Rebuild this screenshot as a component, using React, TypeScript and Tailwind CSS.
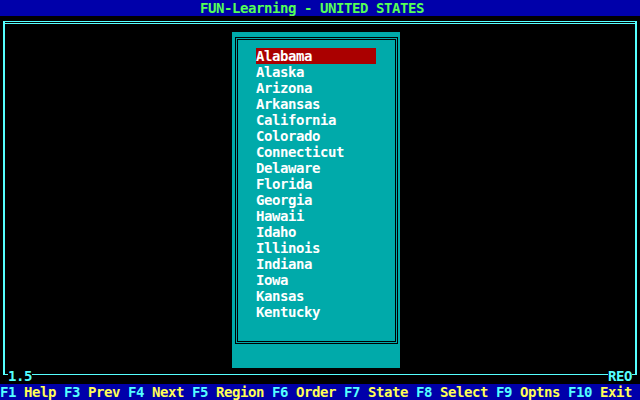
import React from "react";

const states = [
  "Alabama",
  "Alaska",
  "Arizona",
  "Arkansas",
  "California",
  "Colorado",
  "Connecticut",
  "Delaware",
  "Florida",
  "Georgia",
  "Hawaii",
  "Idaho",
  "Illinois",
  "Indiana",
  "Iowa",
  "Kansas",
  "Kentucky",
];

const keys: [string, string][] = [
  ["F1", "Help"],
  ["F3", "Prev"],
  ["F4", "Next"],
  ["F5", "Region"],
  ["F6", "Order"],
  ["F7", "State"],
  ["F8", "Select"],
  ["F9", "Optns"],
  ["F10", "Exit"],
];

export default function App() {
  return (
    <div
      className="w-[640px] h-[400px] bg-black flex flex-col overflow-hidden font-bold text-[14px] tracking-[-0.43px] leading-[16px] whitespace-pre"
      style={{ fontFamily: '"DejaVu Sans Mono", "Liberation Mono", monospace' }}
    >
      {/* title bar */}
      <div className="h-[16px] bg-[#0000AA] text-[#55FF55] pl-[200px]">
        FUN-Learning - UNITED STATES
      </div>

      {/* outer frame */}
      <div className="mt-[5px] mx-[3px] border-t border-x-2 border-[#55FFFF] flex flex-col">
        <div className="mt-px h-px bg-[#55FFFF]" />
        <div className="mt-[8px] ml-[227px] w-[168px] h-[336px] bg-[#00AAAA] flex flex-col">
          <div className="mt-[5px] ml-[3px] w-[163px] h-[307px] border-[3px] border-double border-black flex flex-col pt-[8px] pl-[18px]">
            {states.map((s, i) => (
              <div
                key={s}
                className={
                  i === 0
                    ? "h-[16px] w-[120px] bg-[#AA0000] text-white"
                    : "h-[16px] w-[120px] text-white"
                }
              >
                {s}
              </div>
            ))}
          </div>
        </div>
      </div>

      {/* bottom frame row */}
      <div className="h-[16px] flex text-[#55FFFF]">
        <div className="w-[8px]">
          <div className="ml-[3px] w-[5px] h-[7px] border-l-2 border-b border-[#55FFFF]" />
        </div>
        <div className="w-[24px]">1.5</div>
        <div className="flex-1">
          <div className="mt-[6px] h-px bg-[#55FFFF]" />
        </div>
        <div className="w-[24px]">REO</div>
        <div className="w-[8px]">
          <div className="w-[5px] h-[7px] border-r-2 border-b border-[#55FFFF]" />
        </div>
      </div>

      {/* function key bar */}
      <div className="h-[16px] bg-[#0000AA] flex">
        {keys.map(([k, l], i) => (
          <span key={k}>
            <span className="text-[#55FFFF]">{k}</span>
            <span className="text-[#FFFF55]">{" " + l + (i < keys.length - 1 ? " " : "")}</span>
          </span>
        ))}
      </div>
    </div>
  );
}
